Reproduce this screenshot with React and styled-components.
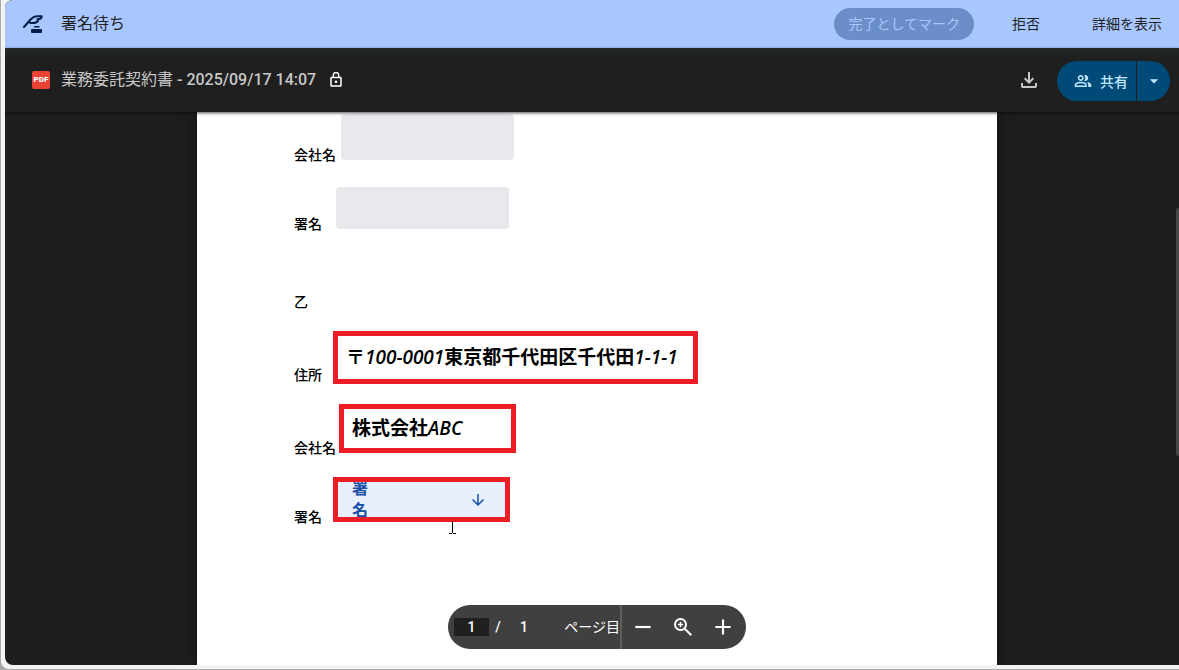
import React from "react"
import styled, { createGlobalStyle } from "styled-components"

const GlobalStyle = createGlobalStyle`
  * {
    box-sizing: border-box;
  }

  body {
    margin: 0;
    font-family: Roboto, "Noto Sans CJK JP", sans-serif;
    overflow: hidden;
  }

  button,
  input {
    font-family: inherit;
    margin: 0;
    padding: 0;
    border: 0;
    background: none;
    color: inherit;
  }

  button {
    cursor: pointer;
  }
`

const Desktop = styled.div`
  height: 100vh;
  padding: 0 0 1px 1px;
  background: #a9a9ac;
`

const WindowFrame = styled.div`
  height: 100%;
  padding: 0 0 4px 4px;
  background: #f3f3f3;
  border-radius: 0 0 0 8px;
`

const Window = styled.main`
  display: flex;
  flex-direction: column;
  height: 100%;
  overflow: hidden;
  background: #1e1e1e;
  border-radius: 8px 0 0 8px;
`

const Banner = styled.header`
  display: flex;
  align-items: center;
  flex: none;
  height: 48px;
  padding: 0 17px;
  background: #a8c7fe;
  color: #1f1f1f;
`

const BannerTitle = styled.span`
  flex: 1;
  margin-left: 17px;
  font-size: 16px;
  line-height: 24px;
`

const DoneButton = styled.button`
  height: 32px;
  padding: 0 14px 2px;
  border-radius: 16px;
  background: #6b8ec8;
  color: #a8c7fe;
  font-size: 14px;
`

const TextButton = styled.button`
  height: 32px;
  margin-left: ${(props) => props.$gap}px;
  padding-bottom: 2px;
  font-size: 14px;
`

const DocumentBar = styled.div`
  position: relative;
  z-index: 1;
  display: flex;
  align-items: center;
  flex: none;
  height: 64px;
  padding: 0 9px 0 27px;
  background: linear-gradient(#232a29, #1f1f1f 10px);
  color: #c7c7c7;
  box-shadow: 0 1px 3px rgba(0, 0, 0, 0.7);
`

const DocumentTitle = styled.h1`
  flex: none;
  margin: 0 14px 0 11px;
  font-size: 16px;
  font-weight: 400;
  line-height: 24px;

  b {
    font-weight: 500;
  }
`

const Spacer = styled.div`
  flex: 1;
`

const IconButton = styled.button`
  display: flex;
  align-items: center;
  justify-content: center;
  width: 40px;
  height: 40px;
  border-radius: 20px;
`

const ShareGroup = styled.div`
  display: flex;
  gap: 1px;
  margin: 2px 0 0 8px;
  color: #c2e7ff;
`

const ShareButton = styled.button`
  display: flex;
  align-items: center;
  gap: 8px;
  height: 40px;
  padding: 0 8px 0 17px;
  border-radius: 20px 0 0 20px;
  background: #004a77;
  font-size: 14px;
  font-weight: 500;
`

const ShareMenuButton = styled.button`
  display: flex;
  align-items: center;
  justify-content: center;
  width: 33px;
  height: 40px;
  border-radius: 0 20px 20px 0;
  background: #004a77;
`

const Canvas = styled.section`
  position: relative;
  display: flex;
  justify-content: center;
  flex: 1;
  min-height: 0;
  padding-left: 10px;
`

const Page = styled.article`
  position: relative;
  width: 800px;
  padding: 2px 97px 0;
  background: #fff;
  color: #000;
  box-shadow: 0 0 14px rgba(0, 0, 0, 0.5);
`

const Party = styled.div`
  display: flex;
  flex-direction: column;
  gap: ${(props) => props.$gap}px;
`

const PartyName = styled.p`
  margin: 58px 0 0;
  font-size: 14px;
  font-weight: 500;
  line-height: 20px;
`

const Row = styled.div`
  display: flex;
  align-items: flex-end;
`

const FieldLabel = styled.label`
  flex: none;
  width: ${(props) => props.$width}px;
  font-size: 14px;
  font-weight: 500;
  line-height: 20px;
  white-space: nowrap;
`

const EmptyField = styled.input`
  width: 173px;
  height: ${(props) => props.$height}px;
  margin-bottom: 5px;
  border-radius: 4px;
  background: #e8e9ed;
`

const FilledField = styled.input`
  width: ${(props) => props.$width}px;
  height: ${(props) => props.$height}px;
  margin-bottom: ${(props) => props.$bottom}px;
  padding: 0 8px 4px;
  border: 5px solid #ee1c25;
  background: #fff;
  color: #000;
  font-family: "Open Sans", "Noto Sans CJK JP", sans-serif;
  font-size: 19px;
  font-style: italic;
  font-weight: 600;
  font-synthesis: none;
`

const SignField = styled.button`
  display: flex;
  align-items: center;
  justify-content: space-between;
  width: 177px;
  height: 45px;
  margin-bottom: 5px;
  padding: 0 18px 0 14px;
  border: 5px solid #ee1c25;
  background: #e8f0fe;
  color: #174ea6;
  overflow: hidden;

  span {
    width: 16px;
    font-size: 16px;
    font-weight: 700;
    line-height: 22px;
    word-break: break-all;
  }
`

const TextCursor = styled.svg`
  position: absolute;
  top: 409px;
  left: 252px;
`

const ScrollThumb = styled.div`
  position: absolute;
  top: 96px;
  right: 0;
  width: 3px;
  height: 248px;
  border-radius: 3px 0 0 3px;
  background: #474747;
`

const PageControls = styled.div`
  position: absolute;
  bottom: 16px;
  display: flex;
  align-items: center;
  width: 298px;
  height: 44px;
  padding: 0 1px 0 6px;
  border-radius: 22px;
  background: #404040;
  color: #fff;
  font-size: 14px;
  font-weight: 500;
`

const PageInput = styled.input`
  width: 35px;
  height: 18px;
  background: #202020;
  font-size: 14px;
  font-weight: 500;
  text-align: center;
`

const Slash = styled.span`
  width: 18px;
  text-align: center;
`

const PageCount = styled.span`
  width: 34px;
  text-align: center;
`

const PageUnit = styled.span`
  flex: 1;
  padding-bottom: 2px;
  font-weight: 400;
  text-align: right;
  white-space: nowrap;
`

const ZoomControls = styled.div`
  display: flex;
  align-items: center;
  height: 44px;
  padding: 0 2px 0 1px;
  border-left: 2px solid #5f5f5f;
`

const Symbol = ({ size, d }) => (
  <svg width={size} height={size} viewBox="0 -960 960 960" fill="currentColor">
    <path d={d} />
  </svg>
)

const SignatureIcon = () => (
  <svg width="22" height="22" viewBox="0 0 22 22" fill="none">
    <path
      d="M2 14L8.500 6.500C10.500 4.300 12 3.300 14.500 3.300H19.500C20 5 18.500 6 15.500 6.200L16 8C14.500 10 12 10.300 8 9.800"
      stroke="#041e49"
      strokeWidth="2.100"
      strokeLinejoin="round"
      strokeLinecap="round"
    />
    <path d="M12.500 13H17L18 14.600H11.500Z" fill="#041e49" />
    <rect x="9" y="16" width="11" height="4" rx="1" fill="#041e49" />
  </svg>
)

const PdfBadge = styled.span`
  display: flex;
  align-items: center;
  justify-content: center;
  width: 18px;
  height: 18px;
  border-radius: 2px;
  background: #ea4335;
  color: #fff;
  font-size: 8px;
  font-weight: 900;
  line-height: 18px;
`

const LockIcon = () => (
  <svg width="12" height="16" viewBox="0 0 12 16" fill="none" stroke="#fff">
    <rect x="1" y="5.500" width="10" height="8.500" rx="0.500" strokeWidth="1.500" />
    <path d="M3.300 5.500V3.300a2.700 2.700 0 0 1 5.400 0V5.500" strokeWidth="1.500" />
    <circle cx="6" cy="9.700" r="1.300" fill="#fff" stroke="none" />
  </svg>
)

const DOWNLOAD =
  "M480-320 280-520l56-58 104 104v-326h80v326l104-104 56 58-200 200ZM240-160q-33 0-56.500-23.500T160-240v-120h80v120h480v-120h80v120q0 33-23.500 56.500T720-160H240Z"
const GROUP =
  "M40-160v-112q0-34 17.500-62.500T104-378q62-31 126-46.500T360-440q66 0 130 15.500T616-378q29 15 46.500 43.500T680-272v112H40Zm720 0v-120q0-44-24.500-84.500T666-434q51 6 96 20.500t84 35.500q36 20 55 44.500t19 53.500v120H760ZM360-480q-66 0-113-47t-47-113q0-66 47-113t113-47q66 0 113 47t47 113q0 66-47 113t-113 47Zm400-160q0 66-47 113t-113 47q-11 0-28-2.500t-28-5.500q27-32 41.500-71t14.500-81q0-42-14.500-81T544-792q14-5 28-6.500t28-1.500q66 0 113 47t47 113ZM120-240h480v-32q0-11-5.500-20T580-306q-54-27-109-40.500T360-360q-56 0-111 13.500T140-306q-9 5-14.500 14t-5.500 20v32Zm240-320q33 0 56.500-23.500T440-640q0-33-23.500-56.500T360-720q-33 0-56.500 23.500T280-640q0 33 23.500 56.500T360-560Z"
const ARROW_DOWN = "M440-800v487L216-537l-56 57 320 320 320-320-56-57-224 224v-487h-80Z"
const DROP_DOWN = "M480-360 280-560h400L480-360Z"
const MINUS = "M200-440v-80h560v80H200Z"
const PLUS = "M440-440H200v-80h240v-240h80v240h240v80H520v240h-80v-240Z"
const ZOOM_IN =
  "M784-120 532-372q-30 24-69 38t-83 14q-109 0-184.500-75.500T120-580q0-109 75.500-184.500T380-840q109 0 184.500 75.500T640-580q0 44-14 83t-38 69l252 252-56 56ZM380-400q75 0 127.500-52.500T560-580q0-75-52.500-127.500T380-760q-75 0-127.500 52.500T200-580q0 75 52.500 127.500T380-400Zm-30-70v-80h-80v-60h80v-80h60v80h80v60h-80v80h-60Z"

const App = () => (
  <Desktop>
    <GlobalStyle />
    <WindowFrame>
      <Window>
        <Banner>
          <SignatureIcon />
          <BannerTitle>署名待ち</BannerTitle>
          <DoneButton>完了としてマーク</DoneButton>
          <TextButton $gap={38}>拒否</TextButton>
          <TextButton $gap={52}>詳細を表示</TextButton>
        </Banner>
        <DocumentBar>
          <PdfBadge>PDF</PdfBadge>
          <DocumentTitle>
            業務委託契約書 <b>- 2025/09/17 14:07</b>
          </DocumentTitle>
          <LockIcon />
          <Spacer />
          <IconButton aria-label="ダウンロード">
            <Symbol size={24} d={DOWNLOAD} />
          </IconButton>
          <ShareGroup>
            <ShareButton>
              <Symbol size={18} d={GROUP} />
              共有
            </ShareButton>
            <ShareMenuButton aria-label="共有メニュー">
              <Symbol size={20} d={DROP_DOWN} />
            </ShareMenuButton>
          </ShareGroup>
        </DocumentBar>
        <Canvas>
          <Page>
            <Party $gap={22}>
              <Row>
                <FieldLabel htmlFor="company-a" $width={47}>
                  会社名
                </FieldLabel>
                <EmptyField id="company-a" $height={46} readOnly />
              </Row>
              <Row>
                <FieldLabel htmlFor="sign-a" $width={42}>
                  署名
                </FieldLabel>
                <EmptyField id="sign-a" $height={42} readOnly />
              </Row>
            </Party>
            <Party $gap={19}>
              <PartyName>乙</PartyName>
              <Row>
                <FieldLabel htmlFor="address-b" $width={39}>
                  住所
                </FieldLabel>
                <FilledField
                  id="address-b"
                  $width={365}
                  $height={53}
                  $bottom={1}
                  defaultValue="〒100-0001東京都千代田区千代田1-1-1"
                />
              </Row>
              <Row>
                <FieldLabel htmlFor="company-b" $width={45}>
                  会社名
                </FieldLabel>
                <FilledField
                  id="company-b"
                  $width={177}
                  $height={49}
                  $bottom={5}
                  defaultValue="株式会社ABC"
                />
              </Row>
              <Row>
                <FieldLabel htmlFor="sign-b" $width={39}>
                  署名
                </FieldLabel>
                <SignField id="sign-b">
                  <span>署名</span>
                  <Symbol size={18} d={ARROW_DOWN} />
                </SignField>
              </Row>
            </Party>
            <TextCursor width="7" height="13" viewBox="0 0 7 13" fill="#000">
              <path d="M3 0h1v12h3v1H4V12H3v1H0V12h3Z" />
            </TextCursor>
          </Page>
          <ScrollThumb />
          <PageControls>
            <PageInput aria-label="ページ番号" defaultValue="1" />
            <Slash>/</Slash>
            <PageCount>1</PageCount>
            <PageUnit>ページ目</PageUnit>
            <ZoomControls>
              <IconButton aria-label="縮小">
                <Symbol size={26} d={MINUS} />
              </IconButton>
              <IconButton aria-label="ズーム">
                <Symbol size={24} d={ZOOM_IN} />
              </IconButton>
              <IconButton aria-label="拡大">
                <Symbol size={26} d={PLUS} />
              </IconButton>
            </ZoomControls>
          </PageControls>
        </Canvas>
      </Window>
    </WindowFrame>
  </Desktop>
)

export default App
